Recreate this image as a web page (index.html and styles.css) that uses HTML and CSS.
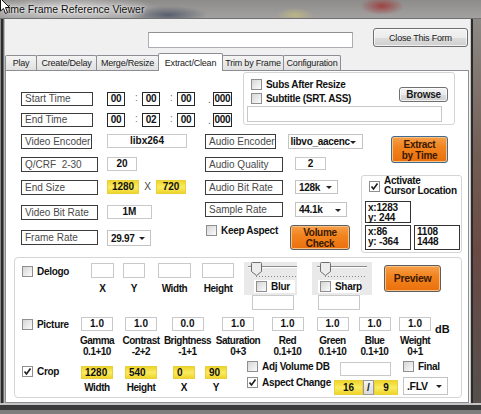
FILE: index.html
```html
<!DOCTYPE html>
<html lang="en">
<head>
    <meta charset="UTF-8">
    <meta name="viewport" content="width=device-width, initial-scale=1.0">
    <title>Time Frame Reference Viewer</title>
    <link rel="stylesheet" href="styles.css">
</head>
<body>
<div class="window">
    <!-- Title bar -->
    <div class="titlebar">
        <span class="title">Time Frame Reference Viewer</span>
        <svg class="pointer" width="11" height="15" viewBox="0 0 11 15">
            <path d="M0.5 -1.5 L0.5 11 L3.5 8.5 L5.5 13.5 L7.5 12.5 L5.5 7.5 L9.5 7.5 Z" fill="#fff" stroke="#111" stroke-width="1"/>
        </svg>
    </div>

    <div class="frame">
        <div class="edge-left"></div>
        <div class="client">
            <div class="topbar">
                <div class="pathbox"></div>
                <div class="btn close-btn">Close This Form</div>
            </div>

            <!-- Tabs -->
            <div class="tabs">
                <div class="tab t1">Play</div>
                <div class="tab t2">Create/Delay</div>
                <div class="tab t3">Merge/Resize</div>
                <div class="tab t4 active">Extract/Clean</div>
                <div class="tab t5">Trim by Frame</div>
                <div class="tab t6">Configuration</div>
            </div>

            <div class="page">
                <!-- Times + subtitles -->
                <div class="sec-a">
                    <div class="times">
                        <div class="trow">
                            <div class="lbl">Start Time</div>
                            <div class="tbox">00</div><span class="colon">:</span>
                            <div class="tbox">00</div><span class="colon">:</span>
                            <div class="tbox">00</div><span class="dot">.</span>
                            <div class="tbox ms">000</div>
                        </div>
                        <div class="trow">
                            <div class="lbl">End Time</div>
                            <div class="tbox">00</div><span class="colon">:</span>
                            <div class="tbox">02</div><span class="colon">:</span>
                            <div class="tbox">00</div><span class="dot">.</span>
                            <div class="tbox ms">000</div>
                        </div>
                    </div>
                    <div class="group subs">
                        <div class="subs-top">
                            <div class="subs-checks">
                                <div class="chk"><span class="cb"></span>Subs After Resize</div>
                                <div class="chk"><span class="cb"></span>Subtitle (SRT. ASS)</div>
                            </div>
                            <div class="btn browse">Browse</div>
                        </div>
                        <div class="subs-path"></div>
                    </div>
                </div>

                <!-- Encoder settings -->
                <div class="sec-b">
                    <div class="col-l">
                        <div class="frow r1">
                            <div class="lbl-cell"><div class="lbl short">Video Encoder</div></div>
                            <div class="vbox w80">libx264</div>
                        </div>
                        <div class="frow">
                            <div class="lbl-cell"><div class="lbl">Q/CRF&nbsp; 2-30</div></div>
                            <div class="vbox w30">20</div>
                        </div>
                        <div class="frow">
                            <div class="lbl-cell"><div class="lbl">End Size</div></div>
                            <div class="ybox w32">1280</div>
                            <span class="times-x">X</span>
                            <div class="ybox w30">720</div>
                        </div>
                        <div class="frow sp">
                            <div class="lbl-cell"><div class="lbl">Video Bit Rate</div></div>
                            <div class="vbox w45">1M</div>
                        </div>
                        <div class="frow sp">
                            <div class="lbl-cell"><div class="lbl">Frame Rate</div></div>
                            <div class="combo fr">29.97</div>
                        </div>
                    </div>

                    <div class="col-m">
                        <div class="frow r1">
                            <div class="lbl">Audio Encoder</div>
                            <div class="combo enc">libvo_aacenc</div>
                        </div>
                        <div class="frow">
                            <div class="lbl">Audio Quality</div>
                            <div class="vbox aq">2</div>
                        </div>
                        <div class="frow">
                            <div class="lbl">Audio Bit Rate</div>
                            <div class="combo abr">128k</div>
                        </div>
                        <div class="frow r7">
                            <div class="lbl">Sample Rate</div>
                            <div class="combo sr">44.1k</div>
                        </div>
                        <div class="keep-row">
                            <div class="chk keep"><span class="cb"></span>Keep Aspect</div>
                            <div class="obtn volume">Volume<br>Check</div>
                        </div>
                    </div>

                    <div class="col-r">
                        <div class="obtn extract">Extract<br>by Time</div>
                        <div class="group cursor-grp">
                            <div class="act">
                                <span class="cb on"><svg width="9" height="9" viewBox="0 0 9 9"><path d="M1.5 4.5 L3.5 7 L7.5 1.5" fill="none" stroke="#1d1d1d" stroke-width="1.6"/></svg></span>
                                <div class="act-text">Activate<br>Cursor Location</div>
                            </div>
                            <div class="coord c1">x:1283<br>y: 244</div>
                            <div class="coord-row">
                                <div class="coord">x:86<br>y: -364</div>
                                <div class="coord">1108<br>1448</div>
                            </div>
                        </div>
                    </div>
                </div>

                <!-- Filters -->
                <div class="group lower">
                    <div class="dl-row">
                        <div class="chk-cell dl"><div class="chk"><span class="cb"></span>Delogo</div></div>
                        <div class="dl-col w23"><div class="vbox"></div><div class="cap">X</div></div>
                        <div class="dl-col w22 m9"><div class="vbox"></div><div class="cap">Y</div></div>
                        <div class="dl-col w33 m13"><div class="vbox"></div><div class="cap">Width</div></div>
                        <div class="dl-col w32 m11"><div class="vbox"></div><div class="cap">Height</div></div>

                        <div class="sl-panel blur">
                            <div class="sl-box">
                                <svg width="53" height="17" viewBox="0 0 53 17">
                                    <line x1="4" y1="4.5" x2="53" y2="4.5" stroke="#8a8a8a"/>
                                    <line x1="4" y1="5.5" x2="53" y2="5.5" stroke="#fdfdfd"/>
                                    <line x1="12" y1="14.5" x2="53" y2="14.5" stroke="#888" stroke-dasharray="1 2"/>
                                    <path d="M7.5 1.5 Q7.5 0.5 8.5 0.5 H16.5 Q17.5 0.5 17.5 1.5 V9.5 L12.5 13.5 L7.5 9.5 Z" fill="#ececec" stroke="#6e6e6e"/>
                                </svg>
                                <div class="sl-chk"><span class="cb"></span>Blur</div>
                            </div>
                            <div class="sl-text"></div>
                        </div>
                        <div class="sl-panel sharp">
                            <div class="sl-box">
                                <svg width="60" height="17" viewBox="0 0 60 17">
                                    <line x1="5" y1="4.5" x2="55" y2="4.5" stroke="#8a8a8a"/>
                                    <line x1="5" y1="5.5" x2="55" y2="5.5" stroke="#fdfdfd"/>
                                    <line x1="13" y1="14.5" x2="55" y2="14.5" stroke="#888" stroke-dasharray="1 2"/>
                                    <path d="M8.5 1.5 Q8.5 0.5 9.5 0.5 H17.5 Q18.5 0.5 18.5 1.5 V9.5 L13.5 13.5 L8.5 9.5 Z" fill="#ececec" stroke="#6e6e6e"/>
                                </svg>
                                <div class="sl-chk"><span class="cb"></span>Sharp</div>
                            </div>
                            <div class="sl-text"></div>
                        </div>
                        <div class="obtn preview">Preview</div>
                    </div>

                    <div class="pic-row">
                        <div class="chk-cell pic"><div class="chk"><span class="cb"></span>Picture</div></div>
                        <div class="pcol" style="width:44px"><div class="vbox">1.0</div><div class="cap">Gamma<br>0.1+10</div></div>
                        <div class="pcol" style="width:44px"><div class="vbox">1.0</div><div class="cap">Contrast<br>-2+2</div></div>
                        <div class="pcol" style="width:49px"><div class="vbox">0.0</div><div class="cap">Brightness<br>-1+1</div></div>
                        <div class="pcol" style="width:52px"><div class="vbox">1.0</div><div class="cap">Saturation<br>0+3</div></div>
                        <div class="pcol" style="width:47px"><div class="vbox">1.0</div><div class="cap">Red<br>0.1+10</div></div>
                        <div class="pcol" style="width:43px"><div class="vbox">1.0</div><div class="cap">Green<br>0.1+10</div></div>
                        <div class="pcol" style="width:41px"><div class="vbox">1.0</div><div class="cap">Blue<br>0.1+10</div></div>
                        <div class="pcol" style="width:40px"><div class="vbox">1.0</div><div class="cap">Weight<br>0+1</div></div>
                        <div class="db">dB</div>
                    </div>

                    <div class="bot-row">
                        <div class="chk-cell crop">
                            <div class="chk"><span class="cb on"><svg width="9" height="9" viewBox="0 0 9 9"><path d="M1.5 4.5 L3.5 7 L7.5 1.5" fill="none" stroke="#1d1d1d" stroke-width="1.6"/></svg></span>Crop</div>
                        </div>
                        <div class="ccol w44"><div class="ybox">1280</div><div class="cap">Width</div></div>
                        <div class="ccol w44"><div class="ybox">540</div><div class="cap">Height</div></div>
                        <div class="ccol w22 m10"><div class="ybox">0</div><div class="cap">X</div></div>
                        <div class="ccol w22 m10"><div class="ybox">90</div><div class="cap">Y</div></div>

                        <div class="right-part">
                            <div class="adj-row">
                                <div class="chk adj"><span class="cb"></span>Adj Volume DB</div>
                                <div class="vbox adj-text"></div>
                                <div class="chk final"><span class="cb"></span>Final</div>
                            </div>
                            <div class="asp-row">
                                <div class="chk asp"><span class="cb on"><svg width="9" height="9" viewBox="0 0 9 9"><path d="M1.5 4.5 L3.5 7 L7.5 1.5" fill="none" stroke="#1d1d1d" stroke-width="1.6"/></svg></span>Aspect Change</div>
                                <div class="ybox a16">16</div>
                                <div class="slash">/</div>
                                <div class="ybox a9">9</div>
                                <div class="combo flv">.FLV</div>
                            </div>
                        </div>
                    </div>
                </div>
            </div>
        </div>
        <div class="edge-right"></div>
    </div>
    <div class="edge-bottom"></div>
</div>
</body>
</html>
```

FILE: styles.css
```css
* {
    box-sizing: border-box;
}

body {
    margin: 0;
    font-family: "Liberation Sans", Arial, sans-serif;
    font-size: 10px;
    color: #111;
}

.window {
    width: 481px;
    height: 414px;
    overflow: hidden;
    position: relative;
}

/* Title bar (blurred glass) */
.titlebar {
    height: 19px;
    padding-left: 2px;
    border-bottom: 1px solid #707070;
    background:
        radial-gradient(ellipse 22px 9px at 382px 6px, rgba(160, 40, 40, 0.75), transparent),
        radial-gradient(ellipse 18px 7px at 295px 15px, rgba(210, 200, 110, 0.55), transparent),
        radial-gradient(ellipse 40px 9px at 168px 15px, rgba(50, 62, 85, 0.65), transparent),
        radial-gradient(ellipse 90px 14px at 70px 9px, rgba(225, 225, 225, 0.8), transparent),
        linear-gradient(#8e8c8b, #a3a1a0);
}

.title {
    display: block;
    line-height: 18px;
    font-size: 10.5px;
    color: #101010;
    text-shadow: 0 0 3px #fff, 0 0 6px #fff;
}

.pointer {
    position: absolute;
    left: 0;
    top: 0;
}

.frame {
    display: flex;
    height: 384px;
}

.edge-left {
    width: 5px;
    background: linear-gradient(90deg, #8c8c8c 0 1px, #2c2c2c 1px 3px, #6c6c6c 3px 4px, #b9b9b9 4px 5px);
}

.edge-right {
    width: 11px;
    background:
        linear-gradient(90deg, #c9c9c9 0 1px, #2b2b2b 1px 3px, transparent 3px),
        linear-gradient(#8d8985, #725e55 35%, #6b4a45 60%, #55504d);
}

.edge-bottom {
    height: 11px;
    background: linear-gradient(#c4c4c4 0 2px, #3a3a3a 2px 7px, #7d7d7d 7px);
}

.client {
    width: 465px;
    background: #f0f0f0;
}

.topbar {
    display: flex;
    align-items: flex-start;
    height: 36px;
}

.pathbox {
    margin: 13px 0 0 143px;
    width: 205px;
    height: 16px;
    background: #fff;
    border: 1px solid #abadb3;
    border-top-color: #8e9094;
}

.btn {
    display: flex;
    align-items: center;
    justify-content: center;
    border: 1px solid #707070;
    border-radius: 3px;
    background: linear-gradient(#f3f3f3 0, #ebebeb 50%, #dddddd 51%, #cfcfcf 100%);
    box-shadow: inset 0 0 0 1px rgba(255, 255, 255, 0.7);
    color: #1a1a1a;
    white-space: nowrap;
}

.close-btn {
    margin: 9px 0 0 20px;
    width: 95px;
    height: 19px;
    font-size: 9px;
    letter-spacing: -0.2px;
}

/* Tabs */
.tabs {
    display: flex;
    align-items: flex-end;
    height: 15px;
}

.tab {
    height: 15px;
    margin-right: -1px;
    border: 1px solid #8c8e94;
    border-bottom: none;
    border-radius: 2px 2px 0 0;
    background: linear-gradient(#f4f4f4, #e0e0e0);
    display: flex;
    align-items: center;
    justify-content: center;
    color: #1a1a1a;
    font-size: 9px;
    letter-spacing: -0.2px;
    white-space: nowrap;
}

.tab.active {
    height: 18px;
    margin-bottom: -1px;
    background: #fff;
    position: relative;
    z-index: 1;
}

.t1 { width: 32px; }
.t2 { width: 61px; }
.t3 { width: 63px; }
.t4 { width: 65px; }
.t5 { width: 62px; }
.t6 { width: 58px; }

.page {
    width: 464px;
    height: 333px;
    background: #fff;
    border: 1px solid #8c8e94;
}

/* Shared controls */
.lbl {
    height: 15px;
    border: 1px solid #3b3b3b;
    background: #fff;
    color: #4a4a4a;
    padding-left: 3px;
    line-height: 13px;
    white-space: nowrap;
}

.vbox {
    height: 14px;
    border: 1px solid #c9c9c9;
    background: #fff;
    font-weight: bold;
    text-align: center;
    line-height: 12px;
}

.ybox {
    height: 14px;
    border: 1px solid #e8d23c;
    background: linear-gradient(#efd42a, #faeb62 50%, #efd42a);
    font-weight: bold;
    text-align: center;
    line-height: 12px;
}

.combo {
    display: flex;
    align-items: center;
    justify-content: space-between;
    border: 1px solid #c3c3c3;
    background: #fff;
    font-weight: bold;
    padding: 0 5px 0 3px;
    white-space: nowrap;
    letter-spacing: -0.3px;
}

.combo::after {
    content: "";
    border-left: 3px solid transparent;
    border-right: 3px solid transparent;
    border-top: 3px solid #222;
    margin-top: 1px;
}

.group {
    border: 1px solid #d5d5d5;
    border-radius: 3px;
}

.chk {
    display: flex;
    align-items: center;
    font-weight: bold;
    white-space: nowrap;
    letter-spacing: -0.3px;
}

.cb {
    width: 11px;
    height: 11px;
    flex: none;
    margin-right: 4px;
    border: 1px solid #8f8f8f;
    background: linear-gradient(135deg, #d6d6d6, #fbfbfb);
}

.cb.on {
    background: #fff;
}

.cb svg {
    display: block;
}

.obtn {
    display: flex;
    align-items: center;
    justify-content: center;
    text-align: center;
    border: 1px solid #5e5e5e;
    border-radius: 3px;
    background: linear-gradient(#f6a04c, #f2841f 40%, #ea700c);
    box-shadow: inset 0 0 0 1px #f8bf82;
    color: #3a1800;
    font-weight: bold;
    line-height: 11px;
    letter-spacing: -0.3px;
}

.cap {
    font-weight: bold;
    white-space: nowrap;
    text-align: center;
    letter-spacing: -0.4px;
}

/* Times + subs */
.sec-a {
    display: flex;
    height: 62px;
}

.times {
    width: 222px;
    margin-left: 15px;
    padding-top: 21px;
}

.trow {
    display: flex;
    height: 14px;
    margin-bottom: 7px;
}

.trow .lbl {
    width: 72px;
    height: 14px;
    line-height: 12px;
    margin-right: 14px;
}

.tbox {
    width: 18px;
    height: 14px;
    border: 1px solid #262626;
    font-weight: bold;
    text-align: center;
    line-height: 12px;
    letter-spacing: -0.3px;
}

.tbox.ms {
    width: 19px;
}

.colon {
    width: 17px;
    padding-left: 10px;
    color: #777;
    line-height: 12px;
}

.dot {
    width: 18px;
    padding-left: 13px;
    line-height: 16px;
    color: #555;
}

.subs {
    width: 212px;
    height: 53px;
    margin-top: 1px;
    padding: 6px 6px 0 7px;
}

.subs-top {
    display: flex;
    height: 27px;
}

.subs .chk {
    height: 14px;
    align-items: flex-start;
    line-height: 11px;
}

.browse {
    width: 49px;
    height: 15px;
    margin: 8px 0 0 auto;
    font-weight: bold;
    letter-spacing: -0.3px;
}

.subs-path {
    width: 195px;
    height: 16px;
    margin-left: -4px;
    border: 1px solid #c8c8c8;
    background: #fff;
}

/* Encoder settings */
.sec-b {
    display: flex;
    height: 120px;
}

.frow {
    display: flex;
    align-items: flex-start;
    height: 15px;
    margin-top: 8px;
}

.frow.r1 { margin-top: 1px; }
.frow.sp { margin-top: 10px; }
.frow.r7 { margin-top: 7px; }

.col-l {
    width: 184px;
    margin-left: 15px;
}

.col-l .lbl-cell { width: 86px; }
.col-l .lbl { width: 77px; }
.col-l .lbl.short { width: 71px; }

.w80 { width: 80px; }
.w30 { width: 30px; }
.w32 { width: 32px; }
.w45 { width: 45px; }

.times-x {
    width: 17px;
    text-align: center;
    color: #444;
    line-height: 14px;
}

.combo.fr {
    width: 44px;
    height: 16px;
}

.col-m {
    width: 156px;
}

.col-m .lbl {
    width: 78px;
    margin-right: 12px;
}

.combo.enc { width: 82px; height: 15px; padding-left: 2px; padding-right: 6px; }
.vbox.aq { width: 31px; height: 13px; line-height: 11px; }
.combo.abr { width: 43px; height: 14px; }
.combo.sr { width: 52px; height: 15px; }

.keep-row {
    display: flex;
    margin-top: 8px;
}

.keep {
    width: 84px;
    margin-left: 1px;
    height: 11px;
}

.volume {
    width: 60px;
    height: 25px;
}

.col-r {
    width: 101px;
}

.extract {
    margin: 3px 0 0 30px;
    width: 57px;
    height: 27px;
    border-color: #3e6b92;
}

.cursor-grp {
    margin-top: 12px;
    width: 101px;
    height: 78px;
    padding: 5px 0 0 7px;
}

.act {
    display: flex;
    height: 20px;
}

.act-text {
    margin-top: -5px;
    font-weight: bold;
    line-height: 10px;
    white-space: nowrap;
    letter-spacing: -0.3px;
}

.coord {
    width: 46px;
    height: 25px;
    border: 1px solid #333;
    font-weight: bold;
    line-height: 10px;
    padding: 1px 0 0 2px;
    letter-spacing: -0.2px;
}

.coord.c1 {
    margin-left: -4px;
    height: 22px;
}

.coord-row {
    display: flex;
    gap: 3px;
    margin: 2px 0 0 -4px;
}

/* Filters group */
.lower {
    width: 448px;
    height: 141px;
    margin: 4px 0 0 8px;
    padding: 4px 0 0 7px;
    border-radius: 4px;
}

.dl-row {
    display: flex;
    height: 48px;
}

.chk-cell.dl { width: 69px; padding-top: 4px; }

.dl-col {
    display: flex;
    flex-direction: column;
    align-items: center;
}

.dl-col .vbox {
    width: 100%;
    height: 15px;
    margin-top: 1px;
}

.dl-col .cap {
    margin-top: 5px;
    line-height: 12px;
}

.w22 { width: 22px; }
.w23 { width: 23px; }
.w33 { width: 33px; }
.w44 { width: 44px; }
.m9 { margin-left: 9px; }
.m10 { margin-left: 10px; }
.m11 { margin-left: 11px; }
.m13 { margin-left: 13px; }

.sl-panel.blur { width: 53px; margin-left: 10px; }
.sl-panel.sharp { width: 60px; margin-left: 15px; }

.sl-box {
    height: 33px;
    background: #e9e9e9;
}

.sl-box svg {
    display: block;
}

.sl-chk {
    display: flex;
    align-items: center;
    height: 13px;
    margin-top: 1px;
    padding-left: 2px;
    background: #fff;
    font-weight: bold;
    letter-spacing: -0.3px;
}

.blur .sl-chk { width: 41px; margin-left: 10px; }
.sharp .sl-chk { width: 42px; margin-left: 6px; }

.sl-text {
    width: 42px;
    height: 15px;
    border: 1px solid #c9c9c9;
    background: #fff;
}

.blur .sl-text { margin-left: 8px; }
.sharp .sl-text { margin-left: 6px; }

.preview {
    width: 57px;
    height: 27px;
    margin: 3px 0 0 12px;
    font-size: 10.5px;
}

.pic-row {
    display: flex;
    height: 40px;
    margin-top: 7px;
}

.chk-cell.pic { width: 53px; padding-top: 2px; }

.pcol {
    display: flex;
    flex-direction: column;
    align-items: center;
}

.pcol .vbox {
    width: 32px;
    height: 14px;
}

.pcol .cap {
    margin-top: 4px;
    line-height: 11px;
    letter-spacing: -0.5px;
}

.db {
    margin-top: 6px;
    font-size: 11px;
    font-weight: bold;
}

.bot-row {
    display: flex;
    margin-top: 4px;
}

.chk-cell.crop { width: 53px; padding-top: 5px; }

.ccol {
    display: flex;
    flex-direction: column;
    align-items: center;
}

.ccol .ybox {
    margin-top: 5px;
    height: 13px;
    line-height: 11px;
    text-align: left;
    padding-left: 3px;
}

.ccol.w44 .ybox { width: 32px; }
.ccol.w22 .ybox { width: 22px; }

.ccol .cap {
    margin-top: 3px;
    line-height: 11px;
}

.right-part {
    margin-left: 20px;
}

.adj-row {
    display: flex;
    height: 16px;
}

.adj {
    width: 93px;
    height: 11px;
}

.adj-text {
    width: 51px;
    margin-top: 1px;
}

.final {
    margin-left: 12px;
    height: 11px;
}

.asp-row {
    display: flex;
    height: 18px;
}

.asp {
    width: 87px;
    height: 11px;
}

.ybox.a16 { width: 29px; height: 15px; margin-top: 3px; line-height: 13px; }
.ybox.a9 { width: 24px; height: 15px; margin-top: 3px; line-height: 13px; }

.slash {
    width: 11px;
    height: 15px;
    margin-top: 3px;
    border: 1px solid #9a9a9a;
    background: linear-gradient(#f4f4f4, #dadada);
    text-align: center;
    font-weight: bold;
    line-height: 13px;
}

.combo.flv {
    width: 45px;
    height: 18px;
    margin-left: 5px;
    font-size: 10.5px;
}
```
